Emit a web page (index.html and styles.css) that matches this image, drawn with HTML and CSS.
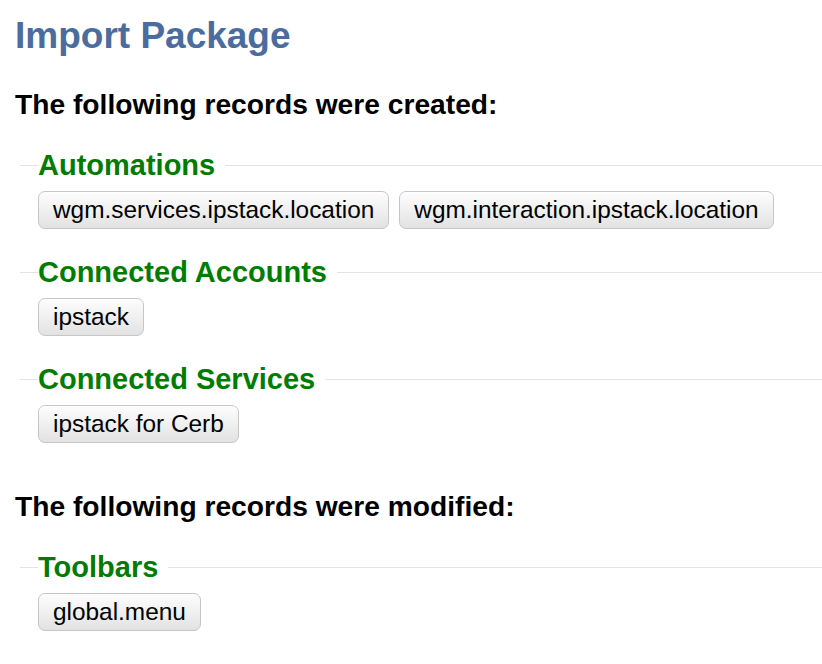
FILE: index.html
```html
<!DOCTYPE html>
<html lang="en">
<head>
<meta charset="utf-8">
<title>Import Package</title>
<link rel="stylesheet" href="styles.css">
</head>
<body>
<div class="page">
  <h1 class="title">Import Package</h1>

  <section class="section">
    <h2 class="heading">The following records were created:</h2>

    <fieldset class="group">
      <legend class="group-title">Automations</legend>
      <div class="chips">
        <button class="chip" type="button">wgm.services.ipstack.location</button>
        <button class="chip" type="button">wgm.interaction.ipstack.location</button>
      </div>
    </fieldset>

    <fieldset class="group">
      <legend class="group-title">Connected Accounts</legend>
      <div class="chips">
        <button class="chip" type="button">ipstack</button>
      </div>
    </fieldset>

    <fieldset class="group">
      <legend class="group-title">Connected Services</legend>
      <div class="chips">
        <button class="chip" type="button">ipstack for Cerb</button>
      </div>
    </fieldset>
  </section>

  <section class="section">
    <h2 class="heading">The following records were modified:</h2>

    <fieldset class="group">
      <legend class="group-title">Toolbars</legend>
      <div class="chips">
        <button class="chip" type="button">global.menu</button>
      </div>
    </fieldset>
  </section>
</div>
</body>
</html>
```

FILE: styles.css
```css
html, body {
  margin: 0;
  padding: 0;
  background: #ffffff;
}

body {
  font-family: "Liberation Sans", Arial, Helvetica, sans-serif;
  color: #000000;
  overflow: hidden;
}

.page {
  display: flex;
  flex-direction: column;
  padding: 15px 0 0 15px;
}

.title {
  margin: 0 0 31px 0;
  font-size: 37px;
  line-height: 42px;
  font-weight: bold;
  color: #4a6c9e;
}

.section {
  display: flex;
  flex-direction: column;
}

.section + .section {
  margin-top: 20px;
}

.heading {
  margin: 0 0 29px 0;
  font-size: 28.2px;
  line-height: 32px;
  font-weight: bold;
  color: #000000;
}

.group {
  margin: 0 0 27px 5px;
  padding: 0 0 0 18px;
  border: 0;
  border-top: 1px solid #e3e3e3;
  min-inline-size: 0;
}

.group-title {
  padding: 0 10px 0 0;
  margin: 0;
  font-size: 29px;
  line-height: 32px;
  font-weight: bold;
  color: #007c00;
}

.chips {
  display: flex;
  flex-wrap: wrap;
  gap: 10px;
  padding-top: 10px;
}

.chip {
  font-family: "Liberation Sans", Arial, Helvetica, sans-serif;
  font-size: 24.4px;
  line-height: 36px;
  height: 38px;
  padding: 0 14px;
  color: #000000;
  border: 1px solid #c6c6c6;
  border-radius: 7px;
  background: linear-gradient(to bottom, #fdfdfd 0%, #f0f0f0 50%, #e2e2e2 100%);
  box-shadow: inset 0 1px 0 #ffffff;
  cursor: pointer;
}
```
